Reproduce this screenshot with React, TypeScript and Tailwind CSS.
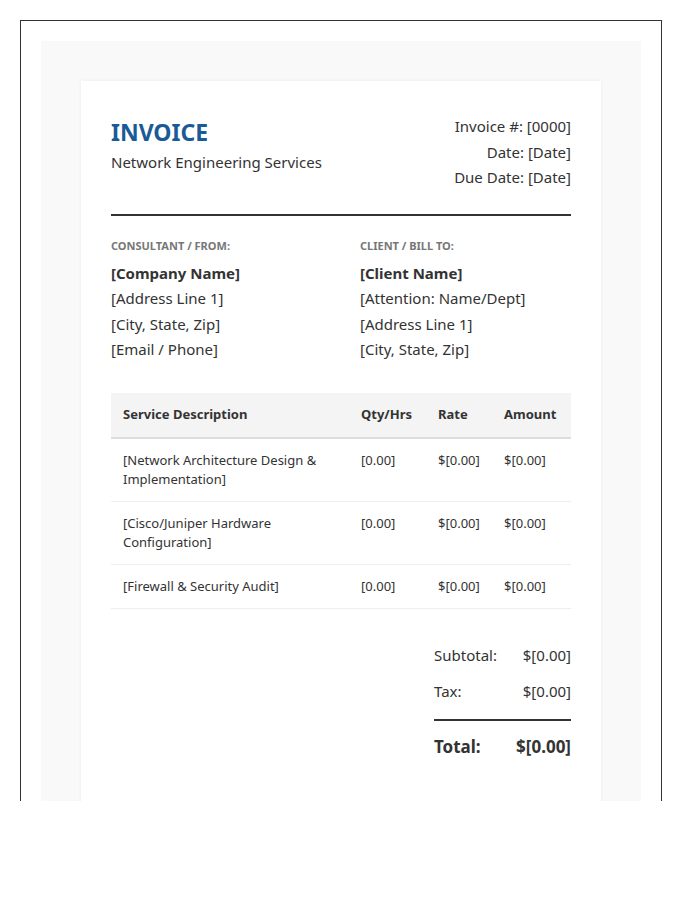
const rows = [
  ['[Network Architecture Design & Implementation]', '[0.00]', '$[0.00]', '$[0.00]'],
  ['[Cisco/Juniper Hardware Configuration]', '[0.00]', '$[0.00]', '$[0.00]'],
  ['[Firewall & Security Audit]', '[0.00]', '$[0.00]', '$[0.00]'],
];

export default function App() {
  return (
    <div className="h-[801px] overflow-hidden bg-white p-5 text-[#333]" style={{ fontFamily: '"Noto Sans", "Open Sans", sans-serif' }}>
      <div className="w-[642px] border border-[#333] p-5 min-h-[900px]">
        <div className="bg-[#f9f9f9] p-10 min-h-[900px]">
          <div className="bg-white shadow-[0_0_4px_rgba(0,0,0,0.06)] px-[30px] pt-[35px] pb-10 min-h-[800px]">
            {/* Header */}
            <div className="flex justify-between border-b-2 border-[#333] pb-[23px]">
              <div>
                <h1 className="text-[23px] font-bold text-[#1a5a96] leading-[32px]">INVOICE</h1>
                <div className="text-[15px] leading-[24px] mt-[2px]">Network Engineering Services</div>
              </div>
              <div className="text-right text-[15px] leading-[25.5px] -mt-[2px]">
                <div>Invoice #: [0000]</div>
                <div>Date: [Date]</div>
                <div>Due Date: [Date]</div>
              </div>
            </div>

            {/* Parties */}
            <div className="flex mt-[22px]">
              <div className="w-[249px]">
                <div className="text-[11px] font-bold text-[#777] uppercase leading-[16px] mb-[7px]">Consultant / From:</div>
                <div className="text-[15px] leading-[25.5px]">
                  <div className="font-bold">[Company Name]</div>
                  <div>[Address Line 1]</div>
                  <div>[City, State, Zip]</div>
                  <div>[Email / Phone]</div>
                </div>
              </div>
              <div>
                <div className="text-[11px] font-bold text-[#777] uppercase leading-[16px] mb-[7px]">Client / Bill To:</div>
                <div className="text-[15px] leading-[25.5px]">
                  <div className="font-bold">[Client Name]</div>
                  <div>[Attention: Name/Dept]</div>
                  <div>[Address Line 1]</div>
                  <div>[City, State, Zip]</div>
                </div>
              </div>
            </div>

            {/* Table */}
            <table className="w-full mt-[30px] border-collapse text-[13px]">
              <thead>
                <tr className="bg-[#f4f4f4] border-b-2 border-[#ddd] text-left">
                  <th className="w-[238px] h-[45px] px-3 font-bold">Service Description</th>
                  <th className="w-[77px] px-3 font-bold">Qty/Hrs</th>
                  <th className="w-[66px] px-3 font-bold">Rate</th>
                  <th className="px-3 font-bold">Amount</th>
                </tr>
              </thead>
              <tbody>
                {rows.map((r, i) => (
                  <tr key={i} className="border-b border-[#eee] align-top leading-[19px]">
                    {r.map((c, j) => (
                      <td key={j} className="px-3 py-3">{c}</td>
                    ))}
                  </tr>
                ))}
              </tbody>
            </table>

            {/* Totals */}
            <div className="flex justify-end mt-[28px]">
              <div className="w-[137px] text-[15px]">
                <div className="flex justify-between leading-[36px]">
                  <span>Subtotal:</span><span>$[0.00]</span>
                </div>
                <div className="flex justify-between leading-[36px] pb-[10px] border-b-2 border-[#333]">
                  <span>Tax:</span><span>$[0.00]</span>
                </div>
                <div className="flex justify-between text-[17px] font-bold mt-[12px] leading-[28px]">
                  <span>Total:</span><span>$[0.00]</span>
                </div>
              </div>
            </div>
          </div>
        </div>
      </div>
    </div>
  );
}
